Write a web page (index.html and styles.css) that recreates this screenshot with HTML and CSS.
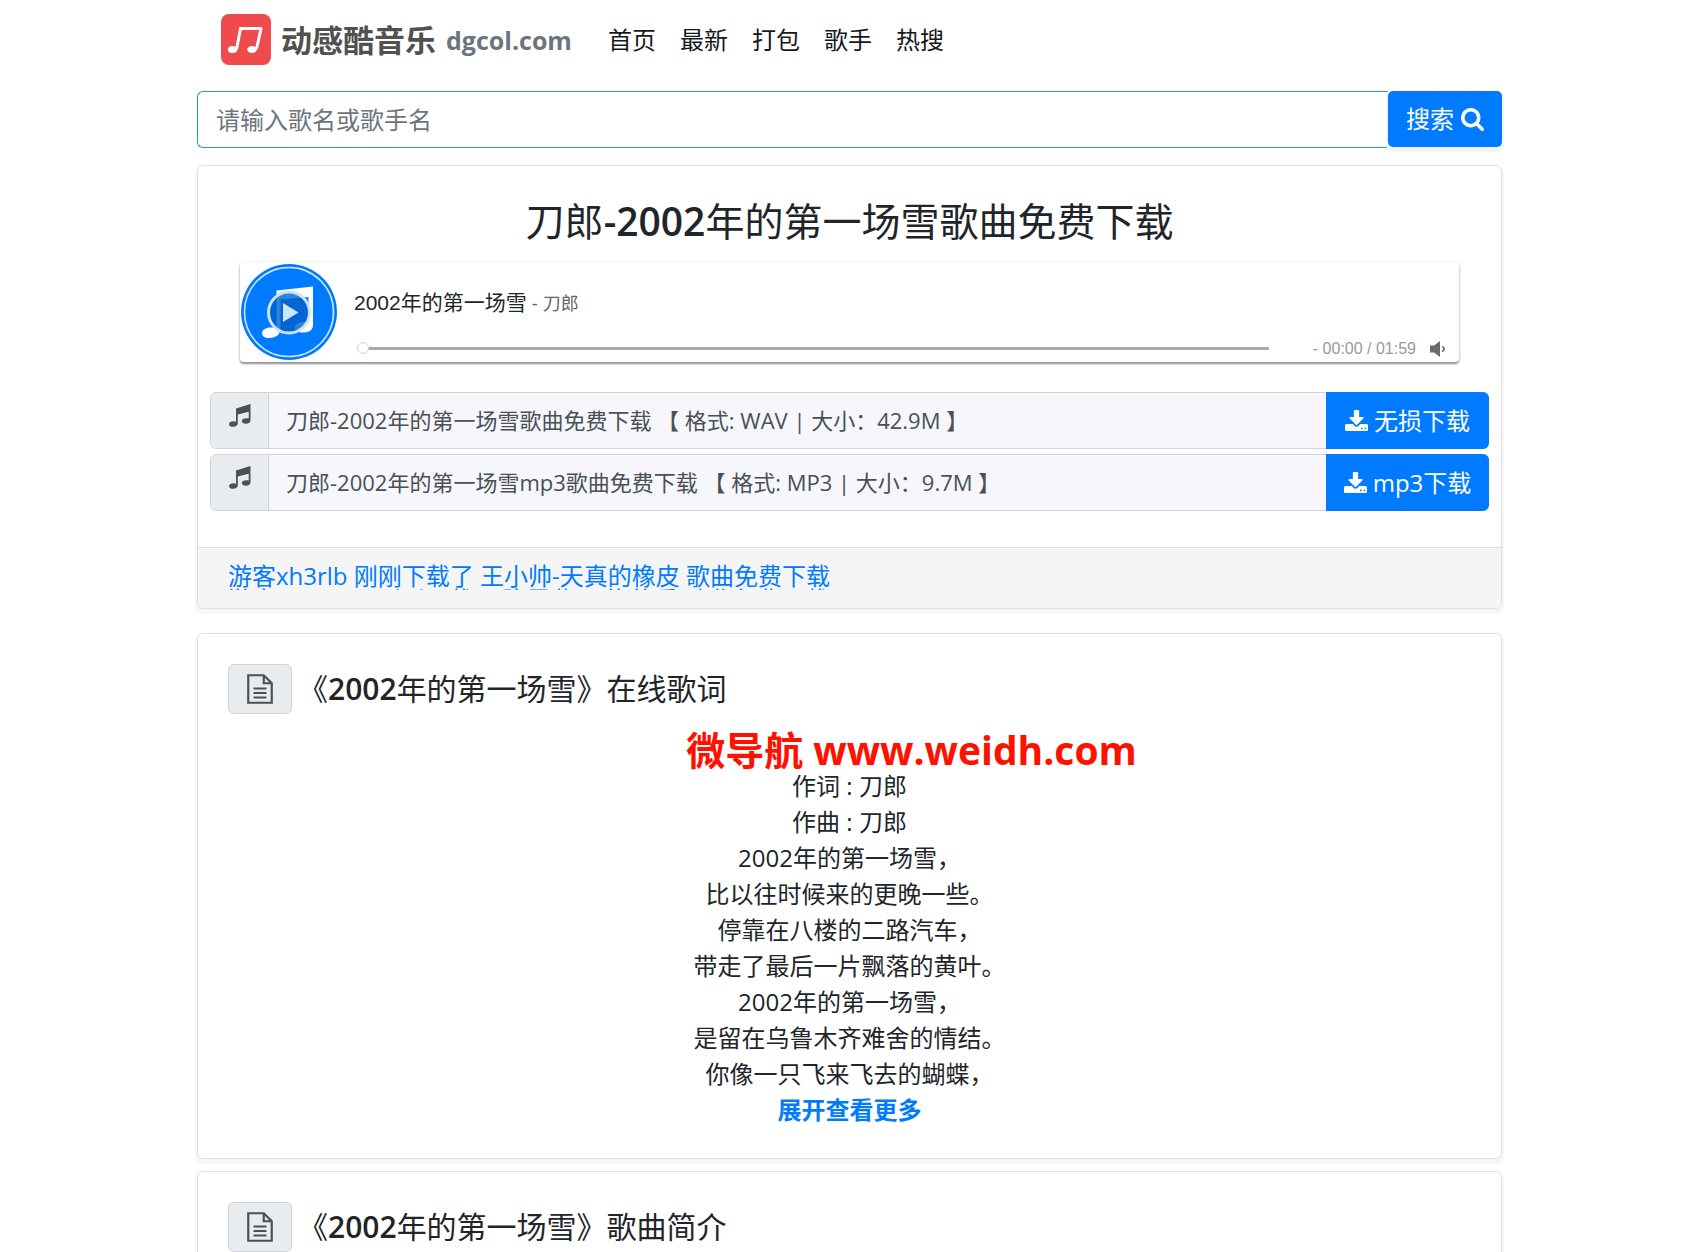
FILE: index.html
```html
<!DOCTYPE html>
<html lang="zh-CN">
<head>
  <meta charset="UTF-8">
  <meta name="viewport" content="width=device-width, initial-scale=1.0">
  <title>刀郎-2002年的第一场雪歌曲免费下载</title>
  <link rel="stylesheet" href="styles.css">
</head>
<body>
<svg class="sprite" aria-hidden="true">
  <symbol id="i-search" viewBox="0 0 1664 1664"><path d="M1152 704q0-185-131.5-316.5t-316.5-131.5-316.5 131.5-131.5 316.5 131.5 316.5 316.5 131.5 316.5-131.5 131.5-316.5zm512 832q0 52-38 90t-90 38q-54 0-90-38l-343-342q-179 124-399 124-143 0-273.5-55.5t-225-150-150-225-55.5-273.5 55.5-273.5 150-225 225-150 273.5-55.5 273.5 55.5 225 150 150 225 55.5 273.5q0 220-124 399l343 343q37 37 37 90z"/></symbol>
  <symbol id="i-download" viewBox="0 0 1664 1536"><path d="M1280 1344q0-26-19-45t-45-19-45 19-19 45 19 45 45 19 45-19 19-45zm256 0q0-26-19-45t-45-19-45 19-19 45 19 45 45 19 45-19 19-45zm128-224v320q0 40-28 68t-68 28h-1472q-40 0-68-28t-28-68v-320q0-40 28-68t68-28h465l135 136q58 56 136 56t136-56l136-136h464q40 0 68 28t28 68zm-325-569q17 41-14 70l-448 448q-18 19-45 19t-45-19l-448-448q-31-29-14-70 17-39 59-39h256v-448q0-26 19-45t45-19h256q26 0 45 19t19 45v448h256q42 0 59 39z"/></symbol>
  <symbol id="i-music" viewBox="0 0 22 23"><path d="M7 4.500L21.500 0v16.500c0 2-2 3.200-4.500 3.200s-4.200-1-4.200-2.600 2-2.900 4.600-2.900c1 0 1.700.1 2.300.4V7.700L8.800 10.600v9c0 2-2 3.200-4.500 3.200S0 21.800 0 20.200s2-2.900 4.600-2.900c1 0 1.800.2 2.400.5z"/></symbol>
  <symbol id="i-file" viewBox="0 0 26 30"><path d="M1.250 1.250h15.500l8 8v19.500H1.250zM16.750 1.250v8h8M6.500 14.500h13M6.500 19h13M6.500 23.500h13" fill="none" stroke="currentColor" stroke-width="2.200"/></symbol>
</svg>

<div class="container">
  <header class="navbar">
    <a class="brand" href="#">
      <svg class="logo" viewBox="0 0 50 51" aria-hidden="true">
        <rect width="50" height="51" rx="8" fill="#ef4b4d"/>
        <path d="M15.500 35.500L19.500 14.500H40L35.500 35" fill="none" stroke="#fff" stroke-width="3" stroke-linejoin="round"/>
        <ellipse cx="11.500" cy="35.500" rx="4.600" ry="3.500" fill="#fff"/>
        <ellipse cx="31" cy="35.500" rx="4.800" ry="3.500" fill="#fff"/>
      </svg>
      <span class="brand-name">动感酷音乐</span>
      <span class="brand-domain">dgcol.com</span>
    </a>
    <nav class="nav">
      <a href="#">首页</a>
      <a href="#">最新</a>
      <a href="#">打包</a>
      <a href="#">歌手</a>
      <a href="#">热搜</a>
    </nav>
  </header>

  <form class="search">
    <input type="text" name="key" placeholder="请输入歌名或歌手名" aria-label="请输入歌名或歌手名">
    <button type="submit">搜索 <svg class="icon"><use href="#i-search"/></svg></button>
  </form>

  <section class="card song">
    <div class="song-body">
      <h1>刀郎<span class="num">-2002</span>年的第一场雪歌曲免费下载</h1>

      <div class="player">
        <button class="cover" type="button" aria-label="播放">
          <svg viewBox="0 0 96 96" aria-hidden="true">
            <circle cx="48" cy="48" r="48" fill="#007bff"/>
            <circle cx="48" cy="48" r="44.500" fill="none" stroke="#d5e9ff" stroke-width="1.500"/>
            <path d="M35.500 26.500L72 22.500V61c0 5-4 7.500-9.500 7.500S54 66.500 54 63.500s3.500-5.500 9-5.500c2 0 3.500.3 4.500.8V33l-28 2.500V65c0 5-4.500 9-11 9-5 0-7.500-2-7.500-5s3.500-5.500 8.500-5.500c2.500 0 4.500.5 6 1.500z" fill="#fff"/>
            <circle cx="48" cy="48.500" r="20.500" fill="#0062cc" fill-opacity=".8" stroke="#cce5ff" stroke-width="3"/>
            <path d="M42 39v19l15.500-9.500z" fill="#cce5ff"/>
          </svg>
        </button>
        <div class="player-info">
          <div class="track"><span class="track-title">2002年的第一场雪</span><span class="track-artist"> - 刀郎</span></div>
          <div class="controls">
            <input class="progress" type="range" min="0" max="119" value="0" aria-label="播放进度">
            <span class="time">- 00:00 / 01:59</span>
            <button class="volume" type="button" aria-label="音量">
              <svg viewBox="0 0 16 16" aria-hidden="true"><path d="M0 4.500h4L10 0v16l-6-4.500H0z"/><path d="M12 5.500c2.800.8 2.800 4.200 0 5" fill="none" stroke="currentColor" stroke-width="1.800"/></svg>
            </button>
          </div>
        </div>
      </div>

      <div class="download">
        <span class="download-icon"><svg class="note"><use href="#i-music"/></svg></span>
        <span class="download-text">刀郎-2002年的第一场雪歌曲免费下载 【 格式: WAV | 大小：42.9M 】</span>
        <button type="button"><svg class="icon"><use href="#i-download"/></svg> 无损下载</button>
      </div>
      <div class="download">
        <span class="download-icon"><svg class="note"><use href="#i-music"/></svg></span>
        <span class="download-text">刀郎-2002年的第一场雪mp3歌曲免费下载 【 格式: MP3 | 大小：9.7M 】</span>
        <button type="button"><svg class="icon"><use href="#i-download"/></svg> mp3下载</button>
      </div>
    </div>
    <footer class="card-footer">
      <ul class="ticker">
        <li><a href="#">游客xh3rlb 刚刚下载了 王小帅-天真的橡皮 歌曲免费下载</a></li>
        <li><a href="#">游客mxe3wa 刚刚下载了 陈雪燕-无悔的爱 歌曲免费下载</a></li>
      </ul>
    </footer>
  </section>

  <section class="card">
    <h2><span class="badge"><svg class="file"><use href="#i-file"/></svg></span><span>《<span class="num">2002</span>年的第一场雪》在线歌词</span></h2>
    <p class="promo">微导航 www.weidh.com</p>
    <div class="lyrics">
      <p>作词 : 刀郎</p>
      <p>作曲 : 刀郎</p>
      <p>2002年的第一场雪，</p>
      <p>比以往时候来的更晚一些。</p>
      <p>停靠在八楼的二路汽车，</p>
      <p>带走了最后一片飘落的黄叶。</p>
      <p>2002年的第一场雪，</p>
      <p>是留在乌鲁木齐难舍的情结。</p>
      <p>你像一只飞来飞去的蝴蝶，</p>
      <a class="more" href="#">展开查看更多</a>
    </div>
  </section>

  <section class="card">
    <h2><span class="badge"><svg class="file"><use href="#i-file"/></svg></span><span>《<span class="num">2002</span>年的第一场雪》歌曲简介</span></h2>
  </section>
</div>
</body>
</html>
```
FILE: styles.css
```css
* {
  box-sizing: border-box;
}

html {
  overflow-x: hidden;
}

body {
  margin: 0;
  padding-left: 10px;
  background: #fff;
  color: #212529;
  font-family: "Open Sans", "Noto Sans CJK SC", sans-serif;
  font-size: 24px;
  line-height: 36px;
}

h1, h2, p, ul {
  margin: 0;
  padding: 0;
}

a {
  color: #007bff;
  text-decoration: none;
}

button, input {
  font: inherit;
}

button {
  border: none;
  cursor: pointer;
}

svg {
  display: block;
  flex: none;
  fill: currentColor;
}

.sprite {
  position: absolute;
  width: 0;
  height: 0;
}

.container {
  max-width: 1305px;
  margin: 0 auto;
}

/* Header */
.navbar {
  display: flex;
  align-items: center;
  gap: 36px;
  height: 79px;
  padding-left: 24px;
}

.brand {
  display: flex;
  align-items: center;
  gap: 10px;
  font-weight: bold;
}

.logo {
  width: 50px;
  height: 51px;
}

.brand-name {
  color: #51514d;
  font-size: 31px;
}

.brand-domain {
  color: #6c757d;
  font-size: 25px;
}

.nav {
  display: flex;
  gap: 24px;
}

.nav a {
  color: #16181b;
}

/* Search */
.search {
  display: flex;
  margin: 12px 0 17px;
}

.search input {
  flex: 1;
  min-width: 0;
  height: 57px;
  padding: 0 18px;
  border: 1px solid #17a2b8;
  border-right: none;
  border-radius: 6px 0 0 6px;
  background: #fff;
}

.search input::placeholder {
  color: #6c757d;
}

.search button {
  display: flex;
  align-items: center;
  gap: 7px;
  height: 56px;
  padding: 0 18px;
  border-radius: 5px;
  background: #007bff;
  box-shadow: 0 3px 0 2px #f5f5f5;
  color: #fff;
}

.icon {
  width: 23px;
  height: 23px;
}

/* Cards */
.card {
  margin-bottom: 12px;
  padding: 30px;
  border: 1px solid #dfdfdf;
  border-radius: 6px;
  background: #fff;
  box-shadow: 0 3px 0 2px #f6f6f6;
}

.song {
  margin-bottom: 24px;
  padding: 0;
}

.song-body {
  padding: 27px 12px 31px;
}

h1 {
  font-size: 39px;
  font-weight: 400;
  line-height: 56px;
  text-align: center;
}

.num {
  font-weight: 600;
}

/* Player */
.player {
  display: flex;
  gap: 17px;
  margin: 13px 30px 30px;
  padding: 1px;
  border-radius: 4px;
  box-shadow: 0 2px 2px rgba(0, 0, 0, .4), 0 1px 0 2px #f5f5f5;
}

.cover {
  width: 96px;
  height: 97px;
  padding: 0;
  background: none;
}

.player-info {
  flex: 1;
  padding: 19px 12px 0 0;
  font-family: "Liberation Sans", "Noto Sans CJK SC", sans-serif;
}

.track {
  font-size: 21px;
  line-height: 42px;
}

.track-artist {
  color: #666;
  font-size: 18px;
}

.controls {
  display: flex;
  align-items: flex-end;
  height: 36px;
  padding-bottom: 4px;
  line-height: 16px;
}

.progress {
  flex: 1;
  appearance: none;
  height: 12px;
  margin: 0 44px 3px 3px;
  background: linear-gradient(#aaa, #aaa) center / 100% 3px no-repeat;
}

.progress::-webkit-slider-thumb {
  appearance: none;
  width: 12px;
  height: 12px;
  border: 1px solid #b8daff;
  border-radius: 50%;
  background: #fff;
}

.time {
  color: #999;
  font-size: 16px;
}

.volume {
  width: 30px;
  padding: 0 0 0 14px;
  background: none;
  color: #6b6b69;
}

.volume svg {
  width: 16px;
  height: 16px;
}

/* Download rows */
.download {
  display: flex;
  height: 57px;
  margin-bottom: 5px;
  border: 1px solid #ced4da;
  border-radius: 6px;
  color: #495057;
}

.download-icon {
  width: 58px;
  padding: 11px 18px;
  border-right: 1px solid #ced4da;
  border-radius: 5px 0 0 5px;
  background: #e9ecef;
}

.note {
  width: 22px;
  height: 23px;
}

.download-text {
  flex: 1;
  padding: 0 17px;
  background: #f6f6fb;
  font-size: 22px;
  line-height: 55px;
}

.download button {
  display: flex;
  align-items: center;
  justify-content: center;
  gap: 6px;
  width: 163px;
  margin: -1px;
  padding: 0;
  border-radius: 0 6px 6px 0;
  background: #007bff;
  color: #fff;
  white-space: nowrap;
}

/* Recent downloads */
.card-footer {
  padding: 16px 30px 18px;
  border-top: 1px solid #dfdfdf;
  border-radius: 0 0 6px 6px;
  background: #f5f5f5;
}

.ticker {
  height: 26px;
  overflow: hidden;
  line-height: 24px;
  list-style: none;
}

h2 {
  display: flex;
  align-items: center;
  gap: 6px;
  font-size: 30px;
  font-weight: 400;
}

.badge {
  padding: 9px 18px;
  border: 1px solid #ced4da;
  border-radius: 6px;
  background: #e9ecef;
  color: #495057;
}

.file {
  width: 26px;
  height: 30px;
}

/* Lyrics */
.promo {
  margin-top: 18px;
  padding-left: 124px;
  color: #ff1100;
  font-size: 39px;
  font-weight: bold;
  text-align: center;
}

.lyrics {
  text-align: center;
}

.more {
  font-weight: bold;
}
```
